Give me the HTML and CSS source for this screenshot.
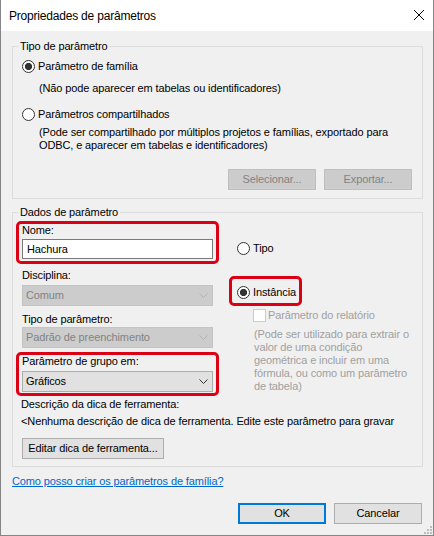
FILE: index.html
```html
<!DOCTYPE html>
<html lang="pt">
<head>
<meta charset="utf-8">
<title>Propriedades de parâmetros</title>
<link rel="stylesheet" href="styles.css">
</head>
<body>
<div class="window">
  <div class="titlebar">
    <span class="title">Propriedades de parâmetros</span>
    <svg class="close" width="10" height="10" viewBox="0 0 10 10"><path d="M0 0L10 10M10 0L0 10" stroke="#000" stroke-width="1"/></svg>
  </div>
  <div class="main">
    <fieldset class="group g1">
      <legend>Tipo de parâmetro</legend>
      <div class="content">
        <div class="radio"><span class="rb on"></span><span>Parâmetro de família</span></div>
        <div class="note n1">(Não pode aparecer em tabelas ou identificadores)</div>
        <div class="radio r2"><span class="rb"></span><span>Parâmetros compartilhados</span></div>
        <div class="note n2">(Pode ser compartilhado por múltiplos projetos e famílias, exportado para<br>ODBC, e aparecer em tabelas e identificadores)</div>
        <div class="btnrow">
          <div class="btn dis">Selecionar...</div>
          <div class="btn dis">Exportar...</div>
        </div>
      </div>
    </fieldset>
    <fieldset class="group g2">
      <legend>Dados de parâmetro</legend>
      <div class="content">
        <div class="cols">
          <div class="left">
            <div class="hl hl1">
              <div class="lbl">Nome:</div>
              <div class="input">Hachura</div>
            </div>
            <div class="lbl lbl-disc">Disciplina:</div>
            <div class="combo dis c1"><span>Comum</span><svg width="9" height="5" viewBox="0 0 9 5"><path d="M0.5 0.5L4.5 4.5L8.5 0.5" fill="none" stroke="#b3b3b3"/></svg></div>
            <div class="lbl lbl-tipo">Tipo de parâmetro:</div>
            <div class="combo dis c2"><span>Padrão de preenchimento</span><svg width="9" height="5" viewBox="0 0 9 5"><path d="M0.5 0.5L4.5 4.5L8.5 0.5" fill="none" stroke="#b3b3b3"/></svg></div>
            <div class="hl hl2">
              <div class="lbl">Parâmetro de grupo em:</div>
              <div class="combo c3"><span>Gráficos</span><svg width="9" height="5" viewBox="0 0 9 5"><path d="M0.5 0.5L4.5 4.5L8.5 0.5" fill="none" stroke="#333"/></svg></div>
            </div>
          </div>
          <div class="right">
            <div class="radio rtipo"><span class="rb"></span><span>Tipo</span></div>
            <div class="hl hl3">
              <div class="radio"><span class="rb on"></span><span>Instância</span></div>
            </div>
            <div class="chk"><span class="cb"></span><span>Parâmetro do relatório</span></div>
            <div class="gray">(Pode ser utilizado para extrair o<br>valor de uma condição<br>geométrica e incluir em uma<br>fórmula, ou como um parâmetro<br>de tabela)</div>
          </div>
        </div>
        <div class="desc">Descrição da dica de ferramenta:</div>
        <div class="desc2">&lt;Nenhuma descrição de dica de ferramenta. Edite este parâmetro para gravar</div>
        <div class="btn edit">Editar dica de ferramenta...</div>
      </div>
    </fieldset>
    <div class="linkrow"><a href="#" class="link">Como posso criar os parâmetros de família?</a></div>
    <div class="footer">
      <div class="btn ok">OK</div>
      <div class="btn cancel">Cancelar</div>
    </div>
  </div>
  <svg class="grip" width="8" height="8" viewBox="0 0 8 8"><g fill="#bcbcbc"><rect x="6" y="0" width="2" height="2"/><rect x="3" y="3" width="2" height="2"/><rect x="6" y="3" width="2" height="2"/><rect x="0" y="6" width="2" height="2"/><rect x="3" y="6" width="2" height="2"/><rect x="6" y="6" width="2" height="2"/></g></svg>
</div>
</body>
</html>
```

FILE: styles.css
```css
* { box-sizing: border-box; }
html, body { margin: 0; }
body {
  background: #f0f0f0;
  font-family: "Liberation Sans", Arial, sans-serif;
  font-size: 11px;
  letter-spacing: -0.12px;
  line-height: 13px;
  color: #000;
}
.window {
  position: relative;
  width: 434px;
  height: 536px;
  border: 1px solid #858585;
  border-top: 0;
  background: #f0f0f0;
}
.titlebar {
  height: 31px;
  background: #fff;
  display: flex;
  align-items: flex-start;
}
.title {
  font-size: 12px;
  letter-spacing: -0.2px;
  line-height: 14px;
  margin: 9px 0 0 8px;
}
.close { margin: 10px 9px 0 auto; }

.group {
  margin: 0 10px 0 11px;
  padding: 0 0 0 5px;
  border: 1px solid #dcdcdc;
  min-width: 0;
}
.group legend {
  padding: 0 2px;
  line-height: 13px;
}
.g1 { margin-top: 9px; }
.g2 { margin-top: 7px; }
.content { margin: 0 10px 0 4px; }
.g1 .content { padding: 7px 0 8px; }
.g2 .content { padding: 0 0 7px; }

.radio { display: flex; align-items: center; gap: 3px; height: 13px; white-space: nowrap; }
.rb {
  flex: none;
  width: 13px;
  height: 13px;
  border: 1px solid #333;
  border-radius: 50%;
  background: #fff;
}
.rb.on { background: radial-gradient(circle, #333 0 3.3px, #fff 3.9px); }

.note { margin-left: 17px; white-space: nowrap; }
.n1 { margin-top: 9px; }
.r2 { margin-top: 13px; }
.n2 { margin-top: 5px; }

.btnrow { margin-top: 17px; display: flex; justify-content: flex-end; gap: 8px; }
.btn {
  height: 21px;
  display: flex;
  align-items: center;
  justify-content: center;
  border: 1px solid #adadad;
  background: #e1e1e1;
  white-space: nowrap;
}
.btn.dis { width: 88px; background: #cccccc; border-color: #bfbfbf; color: #838383; }

.cols { display: flex; gap: 24px; }
.left { width: 191px; flex: none; display: flex; flex-direction: column; }
.right { display: flex; flex-direction: column; align-items: flex-start; }

.hl { border: 3px solid #dc0014; border-radius: 5px; }
.hl .lbl { line-height: 12px; }
.hl1 { margin: 2px -6px 0; padding: 0 3px 2px; }
.input {
  margin-top: 3px;
  height: 20px;
  border: 1px solid #7a7a7a;
  background: #fff;
  padding-left: 4px;
  display: flex;
  align-items: center;
}
.lbl-disc { margin-top: 5px; }
.c1 { margin-top: 3px; }
.lbl-tipo { margin-top: 7px; }
.c2 { margin-top: 1px; }
.combo {
  height: 21px;
  border: 1px solid #adadad;
  background: #e1e1e1;
  display: flex;
  align-items: center;
  justify-content: space-between;
  padding: 0 4px 0 3px;
  white-space: nowrap;
}
.combo.dis { background: #cccccc; border-color: #c4c4c4; color: #838383; }
.hl2 { margin: 4px -6px 0; padding: 0 3px 1px; }
.c3 { margin-top: 4px; }

.rtipo { margin-top: 23px; }
.hl3 { margin: 21px 0 0 -8px; padding: 7px 3px 4px 5px; }
.chk { margin: 3px 0 0 16px; display: flex; align-items: center; gap: 2px; color: #a0a0a0; white-space: nowrap; }
.cb { flex: none; width: 13px; height: 13px; border: 1px solid #cccccc; background: #fff; }
.gray { margin: 6px 0 0 17px; color: #a0a0a0; white-space: nowrap; }

.desc { margin: 2px 0 0 -1px; }
.desc2 { margin: 4px 0 0 -1px; white-space: nowrap; overflow: hidden; }
.btn.edit { margin-top: 10px; width: 142px; }

.linkrow { margin: 8px 0 0 11px; }
.link { color: #0066cc; text-decoration: underline; }
.footer { margin-top: 15px; display: flex; justify-content: flex-end; gap: 8px; padding-right: 11px; }
.btn.ok { width: 88px; border: 2px solid #0078d7; }
.btn.cancel { width: 88px; }

.grip { position: absolute; right: 1px; bottom: 1px; }
```
